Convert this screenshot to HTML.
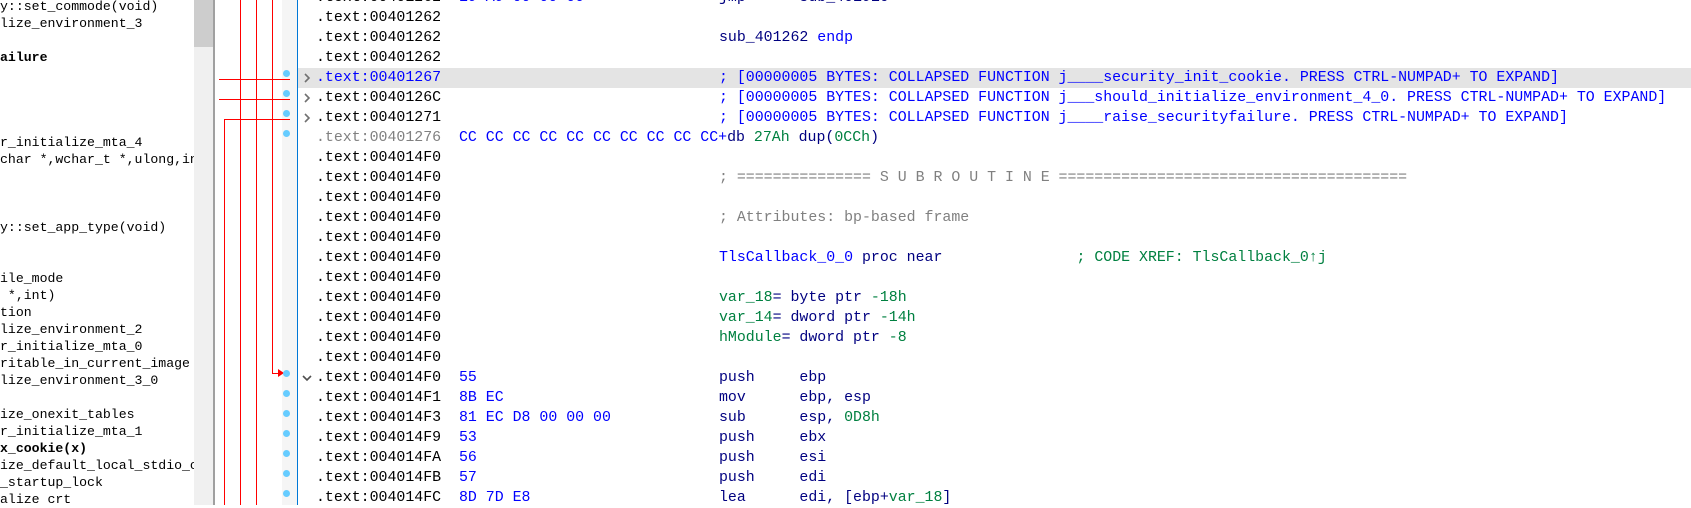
<!DOCTYPE html>
<html><head><meta charset="utf-8">
<style>
html,body{margin:0;padding:0;}
body{width:1691px;height:505px;overflow:hidden;background:#fff;position:relative;}
#left{position:absolute;left:0;top:0;width:194px;height:505px;overflow:hidden;background:#fff;}
.l{position:absolute;left:0;height:17px;line-height:17px;font-family:"Liberation Mono",monospace;font-size:13.2px;color:#000;white-space:pre;}
.b{font-weight:bold;}
#sbt{position:absolute;left:194px;top:0;width:19px;height:505px;background:#f0f0f0;}
#thumb{position:absolute;left:194px;top:0;width:19px;height:47px;background:#cdcdcd;}
#div{position:absolute;left:213px;top:0;width:2px;height:505px;background:#a0a0a0;}
#gut2{position:absolute;left:282px;top:0;width:15px;height:505px;background:#f5f5f5;}
#blue{position:absolute;left:297px;top:0;width:1px;height:505px;background:#0078d7;}
.rv{position:absolute;width:1px;background:#f00;}
.rh{position:absolute;height:1px;background:#f00;}
.dot{position:absolute;width:7px;height:7px;border-radius:50%;background:#66ccff;left:283px;}
.a,.y,.m{position:absolute;height:20px;line-height:20px;font-family:"Liberation Mono",monospace;font-size:14.9px;white-space:pre;color:#000;}
.a{left:316px;} .y{left:459px;color:#0000ff;} .m{left:719px;color:#000080;}
.hl{position:absolute;left:298px;right:0;height:20px;background:#e4e4e4;}
.bl{color:#0000ff;} .nv{color:#000080;} .gr{color:#008040;} .gy{color:#808080;}
.chev{position:absolute;left:302px;width:10px;height:20px;}
</style></head><body>
<div id="left">
<div class="l" style="top:-2px">y::set_commode(void)</div>
<div class="l" style="top:15px">lize_environment_3</div>
<div class="l b" style="top:49px">ailure</div>
<div class="l" style="top:134px">r_initialize_mta_4</div>
<div class="l" style="top:151px">char *,wchar_t *,ulong,int</div>
<div class="l" style="top:219px">y::set_app_type(void)</div>
<div class="l" style="top:270px">ile_mode</div>
<div class="l" style="top:287px"> *,int)</div>
<div class="l" style="top:304px">tion</div>
<div class="l" style="top:321px">lize_environment_2</div>
<div class="l" style="top:338px">r_initialize_mta_0</div>
<div class="l" style="top:355px">ritable_in_current_image</div>
<div class="l" style="top:372px">lize_environment_3_0</div>
<div class="l" style="top:406px">ize_onexit_tables</div>
<div class="l" style="top:423px">r_initialize_mta_1</div>
<div class="l b" style="top:440px">x_cookie(x)</div>
<div class="l" style="top:457px">ize_default_local_stdio_options</div>
<div class="l" style="top:474px">_startup_lock</div>
<div class="l" style="top:491px">alize crt</div>
</div>
<div id="sbt"></div><div id="thumb"></div><div id="div"></div>
<div id="gut2"></div>
<div id="blue"></div>
<div class="rv" style="left:224px;top:119px;height:386px"></div>
<div class="rv" style="left:240px;top:0;height:505px"></div>
<div class="rv" style="left:256px;top:0;height:505px"></div>
<div class="rv" style="left:272px;top:0;height:374px"></div>
<div class="rh" style="left:219px;top:79px;width:71px"></div>
<div class="rh" style="left:219px;top:99px;width:71px"></div>
<div class="rh" style="left:224px;top:119px;width:66px"></div>
<div class="rh" style="left:272px;top:373px;width:6px"></div>
<div style="position:absolute;left:278px;top:369px;width:0;height:0;border-top:4.5px solid transparent;border-bottom:4.5px solid transparent;border-left:6px solid #f00"></div>
<div class="dot" style="top:70px"></div><div class="dot" style="top:90px"></div><div class="dot" style="top:110px"></div><div class="dot" style="top:130px"></div>
<div class="dot" style="top:370px"></div><div class="dot" style="top:390px"></div><div class="dot" style="top:410px"></div><div class="dot" style="top:430px"></div><div class="dot" style="top:450px"></div><div class="dot" style="top:470px"></div><div class="dot" style="top:490px"></div>

<div class="hl" style="top:68px"></div>
<svg class="chev" style="top:68px" viewBox="0 0 10 20"><path d="M3 6 L7 10 L3 14" fill="none" stroke="#707070" stroke-width="1.6"/></svg>
<svg class="chev" style="top:88px" viewBox="0 0 10 20"><path d="M3 6 L7 10 L3 14" fill="none" stroke="#707070" stroke-width="1.6"/></svg>
<svg class="chev" style="top:108px" viewBox="0 0 10 20"><path d="M3 6 L7 10 L3 14" fill="none" stroke="#707070" stroke-width="1.6"/></svg>
<svg class="chev" style="top:368px" viewBox="0 0 10 20"><path d="M1 8 L5 12 L9 8" fill="none" stroke="#505050" stroke-width="1.6"/></svg>

<div class="a" style="top:-12px">.text:00401262</div><div class="y" style="top:-12px">E9 A9 00 00 00</div><div class="m" style="top:-12px">jmp      sub_401910</div>
<div class="a" style="top:8px">.text:00401262</div>
<div class="a" style="top:28px">.text:00401262</div><div class="m" style="top:28px">sub_401262 <span class="bl">endp</span></div>
<div class="a" style="top:48px">.text:00401262</div>
<div class="hl" style="top:68px;display:none"></div>
<div class="a bl" style="top:68px">.text:00401267</div><div class="m bl" style="top:68px">; [00000005 BYTES: COLLAPSED FUNCTION j____security_init_cookie. PRESS CTRL-NUMPAD+ TO EXPAND]</div>
<div class="a" style="top:88px">.text:0040126C</div><div class="m bl" style="top:88px">; [00000005 BYTES: COLLAPSED FUNCTION j___should_initialize_environment_4_0. PRESS CTRL-NUMPAD+ TO EXPAND]</div>
<div class="a" style="top:108px">.text:00401271</div><div class="m bl" style="top:108px">; [00000005 BYTES: COLLAPSED FUNCTION j____raise_securityfailure. PRESS CTRL-NUMPAD+ TO EXPAND]</div>
<div class="a gy" style="top:128px">.text:00401276</div><div class="y" style="top:128px">CC CC CC CC CC CC CC CC CC CC+<span class="nv">db </span><span class="gr">27Ah</span><span class="nv"> dup(</span><span class="gr">0CCh</span><span class="nv">)</span></div>
<div class="a" style="top:148px">.text:004014F0</div>
<div class="a" style="top:168px">.text:004014F0</div><div class="m gy" style="top:168px">; =============== S U B R O U T I N E =======================================</div>
<div class="a" style="top:188px">.text:004014F0</div>
<div class="a" style="top:208px">.text:004014F0</div><div class="m gy" style="top:208px">; Attributes: bp-based frame</div>
<div class="a" style="top:228px">.text:004014F0</div>
<div class="a" style="top:248px">.text:004014F0</div><div class="m" style="top:248px"><span class="bl">TlsCallback_0_0</span> proc near               <span class="gr">; CODE XREF: TlsCallback_0&#x2191;j</span></div>
<div class="a" style="top:268px">.text:004014F0</div>
<div class="a" style="top:288px">.text:004014F0</div><div class="m" style="top:288px"><span class="gr">var_18</span>= byte ptr <span class="gr">-18h</span></div>
<div class="a" style="top:308px">.text:004014F0</div><div class="m" style="top:308px"><span class="gr">var_14</span>= dword ptr <span class="gr">-14h</span></div>
<div class="a" style="top:328px">.text:004014F0</div><div class="m" style="top:328px"><span class="gr">hModule</span>= dword ptr <span class="gr">-8</span></div>
<div class="a" style="top:348px">.text:004014F0</div>
<div class="a" style="top:368px">.text:004014F0</div><div class="y" style="top:368px">55</div><div class="m" style="top:368px">push     ebp</div>
<div class="a" style="top:388px">.text:004014F1</div><div class="y" style="top:388px">8B EC</div><div class="m" style="top:388px">mov      ebp, esp</div>
<div class="a" style="top:408px">.text:004014F3</div><div class="y" style="top:408px">81 EC D8 00 00 00</div><div class="m" style="top:408px">sub      esp, <span class="gr">0D8h</span></div>
<div class="a" style="top:428px">.text:004014F9</div><div class="y" style="top:428px">53</div><div class="m" style="top:428px">push     ebx</div>
<div class="a" style="top:448px">.text:004014FA</div><div class="y" style="top:448px">56</div><div class="m" style="top:448px">push     esi</div>
<div class="a" style="top:468px">.text:004014FB</div><div class="y" style="top:468px">57</div><div class="m" style="top:468px">push     edi</div>
<div class="a" style="top:488px">.text:004014FC</div><div class="y" style="top:488px">8D 7D E8</div><div class="m" style="top:488px">lea      edi, [ebp+<span class="gr">var_18</span>]</div>
</body></html>
